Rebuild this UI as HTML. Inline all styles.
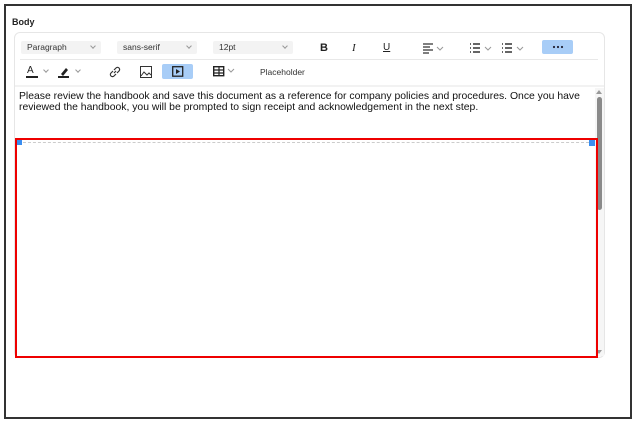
<!DOCTYPE html>
<html><head><style>
*{box-sizing:border-box;margin:0;padding:0}
body{width:634px;height:424px;background:#fff;font-family:"Liberation Sans",sans-serif;position:relative;overflow:hidden}
.a{position:absolute}
.outer{left:4px;top:4px;width:628px;height:415px;border:2px solid #333}
.lbl{left:12px;top:17px;font-size:9px;font-weight:bold;color:#222}
.ed{left:14px;top:32px;width:591px;height:326px;border:1px solid #e6e6e6;border-radius:6px}
.sel{height:13px;background:#f3f3f3;border-radius:2px;font-size:8.5px;color:#333;line-height:13px;padding-left:6px}
.chev{position:absolute;right:6px;top:3px;width:4px;height:4px;border-right:1px solid #999;border-bottom:1px solid #999;transform:rotate(45deg)}
.ic{font-size:11px;color:#222}
.sc{width:4px;height:4px;border-right:1px solid #999;border-bottom:1px solid #999;transform:rotate(45deg)}
.txt{left:19px;top:91px;font-size:10.4px;line-height:11px;color:#111;width:580px}
</style></head><body>
<div class="a outer"></div>
<div class="a lbl">Body</div>
<div class="a ed"></div>
<div class="a sel" style="left:21px;top:41px;width:80px">Paragraph<span class="chev"></span></div>
<div class="a sel" style="left:117px;top:41px;width:80px">sans-serif<span class="chev"></span></div>
<div class="a sel" style="left:213px;top:41px;width:80px">12pt<span class="chev"></span></div>
<div class="a ic" style="left:320px;top:42px;font-weight:bold">B</div>
<div class="a ic" style="left:352px;top:42px;font-style:italic;font-family:'Liberation Serif'">I</div>
<div class="a ic" style="left:383px;top:42px;text-decoration:underline;font-size:10px">U</div>
<svg class="a" style="left:422px;top:43px" width="26" height="11"><path d="M1 1h10M1 4h7M1 7h10M1 10h6" stroke="#333" stroke-width="1.3"/><path d="M15 4l3 3 3-3" stroke="#999" fill="none"/></svg>
<svg class="a" style="left:469px;top:43px" width="60" height="11"><path d="M1 1h1M1 5h1M1 9h1M4 1h7M4 5h7M4 9h7M33 1h1M33 5h1M33 9h1M36 1h7M36 5h7M36 9h7" stroke="#333" stroke-width="1.4"/><path d="M16 4l3 3 3-3M48 4l3 3 3-3" stroke="#999" fill="none"/></svg>
<div class="a" style="left:542px;top:40px;width:31px;height:14px;background:#a8cdf7;border-radius:2px"></div>
<svg class="a" style="left:552px;top:45px" width="12" height="4"><circle cx="2" cy="2" r="1.1" fill="#223"/><circle cx="6" cy="2" r="1.1" fill="#223"/><circle cx="10" cy="2" r="1.1" fill="#223"/></svg>
<div class="a" style="left:20px;top:59px;width:578px;height:1px;background:#e8e8e8"></div>
<div class="a ic" style="left:27px;top:65px;font-size:10px">A</div>
<div class="a" style="left:26px;top:76px;width:12px;height:2px;background:#222"></div>
<div class="a sc" style="left:44px;top:68px"></div>
<svg class="a" style="left:58px;top:66px" width="12" height="13"><path d="M3 8l5-6 2 2-5 6z" fill="#222"/><path d="M0 11h11" stroke="#222" stroke-width="2"/></svg>
<div class="a sc" style="left:76px;top:68px"></div>
<svg class="a" style="left:109px;top:66px" width="12" height="12"><path d="M5 7l2-2M4 5l-2 2a2 2 0 0 0 3 3l2-2M8 7l2-2a2 2 0 0 0-3-3L5 4" stroke="#333" fill="none" stroke-width="1.2"/></svg>
<svg class="a" style="left:140px;top:66px" width="12" height="12"><rect x=".5" y=".5" width="11" height="11" fill="none" stroke="#333"/><path d="M1 10l3-4 3 3 2-2 2 2" stroke="#333" fill="none"/></svg>
<div class="a" style="left:162px;top:64px;width:31px;height:15px;background:#a8cdf7;border-radius:2px"></div>
<svg class="a" style="left:172px;top:66px" width="12" height="11"><rect x=".7" y=".7" width="10" height="9.5" fill="none" stroke="#222" stroke-width="1.3"/><path d="M4 3v5l4-2.5z" fill="#222"/></svg>
<svg class="a" style="left:213px;top:66px" width="24" height="11"><rect x=".7" y=".7" width="10" height="9" fill="none" stroke="#222" stroke-width="1.4"/><path d="M1 4h10M1 7h10M6 1v9" stroke="#222" stroke-width="1.2"/><path d="M15 3l3 3 3-3" stroke="#999" fill="none"/></svg>
<div class="a" style="left:260px;top:67px;font-size:8.5px;color:#333">Placeholder</div>
<div class="a" style="left:15px;top:85px;width:589px;height:2px;background:#f2f2f2"></div>
<div class="a txt">Please review the handbook and save this document as a reference for company policies and procedures. Once you have reviewed the handbook, you will be prompted to sign receipt and acknowledgement in the next step.</div>
<div class="a" style="left:595px;top:88px;width:9px;height:268px;background:#f6f6f6"></div>
<div class="a" style="left:596px;top:90px;width:0;height:0;border-left:3px solid transparent;border-right:3px solid transparent;border-bottom:4px solid #999"></div>
<div class="a" style="left:597px;top:97px;width:5px;height:113px;background:#8a8a8a;border-radius:3px"></div>
<div class="a" style="left:596px;top:350px;width:0;height:0;border-left:3px solid transparent;border-right:3px solid transparent;border-top:4px solid #999"></div>
<div class="a" style="left:15px;top:138px;width:583px;height:220px;border:2px solid #e00"></div>
<div class="a" style="left:18px;top:142px;width:576px;height:0;border-top:1px dashed #ccc"></div>
<div class="a" style="left:17px;top:140px;width:5px;height:5px;background:#3a8ef0"></div>
<div class="a" style="left:589px;top:140px;width:6px;height:6px;background:#3a8ef0"></div>
</body></html>
